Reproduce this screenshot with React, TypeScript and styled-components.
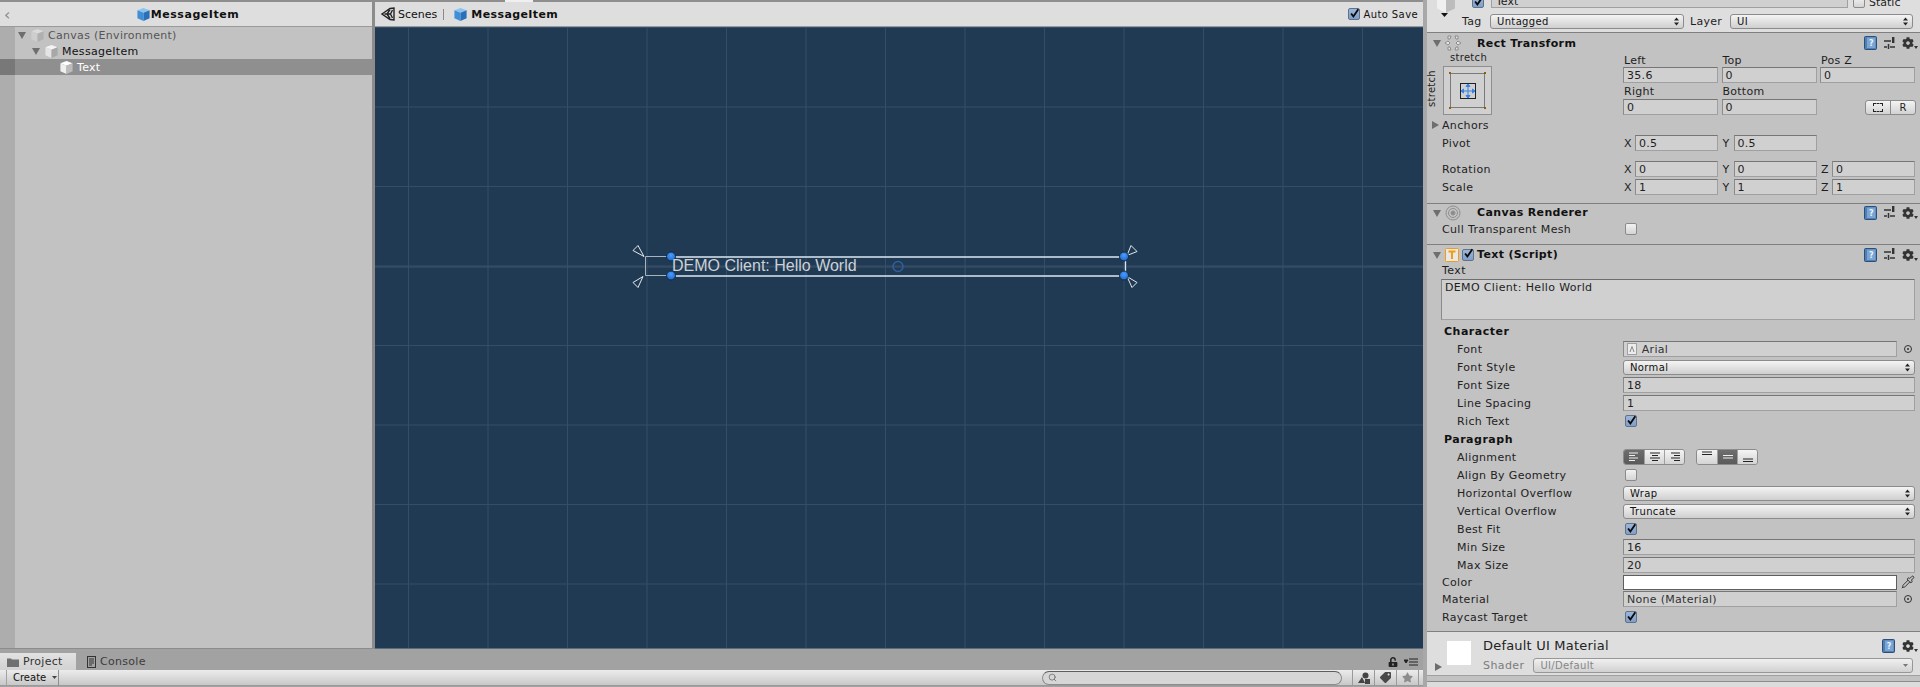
import React from 'react';
import styled, { createGlobalStyle } from 'styled-components';
import { Pipette, Search } from 'lucide-react';
import { FaCog, FaStar, FaTag, FaUnlockAlt } from 'react-icons/fa';

const GlobalStyle = createGlobalStyle`
  html, body { margin: 0; padding: 0; background: #c2c2c2; }
  * { box-sizing: border-box; }
`;

const Root = styled.div`
  display: flex;
  width: 1920px;
  height: 687px;
  overflow: hidden;
  font-family: 'DejaVu Sans', sans-serif;
  font-size: 11px;
  color: #1e1e1e;
`;

const Workspace = styled.div`
  display: flex;
  flex-direction: column;
  width: 1423px;
`;

const TopStrip = styled.div`
  height: 2px;
  background: #8e8e8e;
  flex: none;
`;

const StripTab = styled.div`
  width: 28px;
  height: 2px;
  margin-left: 505px;
  background: #f0f0f0;
`;

const MainArea = styled.div`
  display: flex;
  height: 647px;
`;

const Hierarchy = styled.div`
  display: flex;
  flex-direction: column;
  width: 372px;
  border-bottom: 1px solid #8c8c8c;
`;

const PanelHeader = styled.div<{ $center?: boolean }>`
  position: relative;
  display: flex;
  align-items: center;
  justify-content: ${(p) => (p.$center ? 'center' : 'flex-start')};
  flex: none;
  height: 25px;
  padding-left: ${(p) => (p.$center ? 3 : 0)}px;
  background: #dedede;
  border-bottom: 1px solid #9a9a9a;
  font-weight: 700;
  letter-spacing: 0.55px;
  color: #111;
`;

const BackChevron = styled.span`
  position: absolute;
  left: 4px;
  top: 3px;
  color: #8a8a8a;
  font-weight: 400;
  font-size: 16px;
`;

const Tree = styled.div`
  flex: 1;
  background: linear-gradient(to right, #adadad 15px, #c2c2c2 15px);
`;

const TreeRow = styled.div<{ $indent: number; $selected?: boolean; $muted?: boolean }>`
  display: flex;
  align-items: center;
  gap: 3px;
  height: 16px;
  padding-left: ${(p) => p.$indent}px;
  letter-spacing: 0.3px;
  color: ${(p) => (p.$selected ? '#fff' : p.$muted ? '#555' : '#111')};
  background: ${(p) => (p.$selected ? 'linear-gradient(to right, #787878 15px, #8f8f8f 15px)' : 'transparent')};
`;

const Splitter = styled.div`
  width: 3px;
  background: #8c8c8c;
`;

const Scene = styled.div`
  display: flex;
  flex-direction: column;
  flex: 1;
`;

const SceneCrumbs = styled(PanelHeader)`
  gap: 3px;
  padding: 0 5px 0 6px;
  font-weight: 400;
  letter-spacing: 0;
`;

const CrumbPipe = styled.span`
  width: 1px;
  height: 11px;
  margin: 0 6px 0 3px;
  background: #8a8a8a;
`;

const BoldText = styled.span`
  font-weight: 700;
  letter-spacing: 0.4px;
  color: #111;
`;

const AutoSave = styled.label`
  display: flex;
  align-items: center;
  gap: 3px;
  margin-left: auto;
  font-size: 10px;
  letter-spacing: 0.4px;
`;

const Viewport = styled.div`
  position: relative;
  flex: 1;
  background-color: #203a54;
  background-image: linear-gradient(to right, #344e68 1px, transparent 1px),
    linear-gradient(to bottom, #344e68 1px, transparent 1px);
  background-size: 79.5px 79.5px;
  background-position: 33px 0;
  border-bottom: 1px solid #5a6b7a;
`;

const GizmoLayer = styled.svg`
  position: absolute;
  left: 0;
  top: 0;
  width: 100%;
  height: 100%;
`;

const CanvasText = styled.span`
  position: absolute;
  left: 297px;
  top: 228px;
  font-family: 'Liberation Sans', Arial, sans-serif;
  font-size: 16px;
  line-height: 22px;
  color: #ccd1d6;
  white-space: nowrap;
`;

const BottomPanel = styled.div`
  display: flex;
  flex-direction: column;
  height: 38px;
  background: #a2a2a2;
`;

const TabBar = styled.div`
  display: flex;
  align-items: flex-end;
  height: 21px;
`;

const Tab = styled.div<{ $active?: boolean }>`
  display: flex;
  align-items: center;
  gap: 4px;
  height: 17px;
  width: 76px;
  padding-left: ${(p) => (p.$active ? 7 : 11)}px;
  background: ${(p) => (p.$active ? 'linear-gradient(#e2e2e2, #d2d2d2)' : 'transparent')};
  color: ${(p) => (p.$active ? '#333' : '#3c3c3c')};
  letter-spacing: 0.3px;
`;

const TabTools = styled.div`
  display: flex;
  align-items: center;
  gap: 6px;
  height: 17px;
  margin-left: auto;
  padding-right: 5px;
  color: #222;
`;

const ProjectBar = styled.div`
  display: flex;
  align-items: center;
  height: 16px;
  padding-left: 6px;
  background: linear-gradient(#ececec, #c8c8c8);
  border-bottom: 1px solid #9a9a9a;
`;

const CreateButton = styled.div`
  display: flex;
  align-items: center;
  gap: 6px;
  width: 53px;
  height: 16px;
  padding-left: 6px;
  border-left: 1px solid #a2a2a2;
  border-right: 1px solid #8e8e8e;
  font-size: 10px;
  color: #111;
`;

const SearchPill = styled.div`
  display: flex;
  align-items: center;
  width: 300px;
  height: 14px;
  margin-left: auto;
  padding-left: 5px;
  background: #d6d6d6;
  border: 1px solid #8c8c8c;
  border-top-color: #5e5e5e;
  border-radius: 7px;
  color: #666;
`;

const ToolBox = styled.div<{ $dim?: boolean }>`
  display: flex;
  align-items: center;
  justify-content: center;
  width: 22px;
  height: 16px;
  border-left: 1px solid #9a9a9a;
  color: ${(p) => (p.$dim ? '#8c8c8c' : '#4a4a4a')};
`;

const FilterGroup = styled.div`
  display: flex;
  margin: 0 4px 0 10px;
  border-right: 1px solid #9a9a9a;
`;

const Inspector = styled.div`
  display: flex;
  flex-direction: column;
  width: 497px;
  background: #c2c2c2;
  border-left: 4px solid #a8a8a8;
`;

const ObjectHeader = styled.div`
  display: flex;
  flex: none;
  height: 32px;
  background: #dedede;
  overflow: hidden;
`;

const ObjectIcon = styled.div`
  position: relative;
  flex: none;
  width: 35px;
  padding: 0 0 0 8px;
  margin-top: -8px;
`;

const IconCaret = styled.svg`
  position: absolute;
  left: 14px;
  top: 21px;
`;

const ObjectFields = styled.div`
  display: flex;
  flex-direction: column;
  flex: 1;
  padding-right: 7px;
`;

const NameRow = styled.div`
  display: flex;
  align-items: flex-end;
  gap: 7px;
  height: 11px;
  margin-top: -3px;
  padding-left: 10px;
`;

const NameInput = styled.div`
  display: flex;
  align-items: flex-end;
  width: 357px;
  height: 11px;
  padding: 0 0 0 4px;
  background: #d0d0d0;
  border: 1px solid #a0a0a0;
  border-top: 0;
  line-height: 10px;
  overflow: hidden;
`;

const StaticFlag = styled.span`
  display: flex;
  align-items: flex-end;
  gap: 4px;
  margin-left: -2px;
  line-height: 10px;
`;

const TagRow = styled.div`
  display: flex;
  align-items: center;
  height: 16px;
  margin-top: 5px;
  font-size: 11px;
  letter-spacing: 0.3px;
`;

const TagLabel = styled.span<{ $width: number; $indent: number }>`
  width: ${(p) => p.$width}px;
  padding-left: ${(p) => p.$indent}px;
  flex: none;
`;

const Popup = styled.div<{ $width?: number; $disabled?: boolean }>`
  display: flex;
  align-items: center;
  justify-content: space-between;
  flex: ${(p) => (p.$width ? 'none' : 1)};
  width: ${(p) => (p.$width ? `${p.$width}px` : 'auto')};
  height: 15px;
  padding: 0 4px 0 6px;
  background: linear-gradient(#f4f4f4, #cfcfcf);
  border: 1px solid #8b8b8b;
  border-radius: 3px;
  font-size: 10px;
  letter-spacing: 0.35px;
  color: ${(p) => (p.$disabled ? '#777' : '#111')};
  opacity: ${(p) => (p.$disabled ? 0.85 : 1)};
`;

const Component = styled.section<{ $pad: number }>`
  flex: none;
  padding-bottom: ${(p) => p.$pad}px;
  border-top: 1px solid #7f7f7f;
`;

const ComponentHeader = styled.div<{ $height: number }>`
  display: flex;
  align-items: center;
  height: ${(p) => p.$height}px;
  padding: 0 2px 0 5px;
`;

const HeaderLeft = styled.div`
  display: flex;
  align-items: center;
  width: 45px;
  gap: 3px;
  flex: none;
`;

const ComponentTitle = styled.span`
  font-weight: 700;
  letter-spacing: 0.35px;
  color: #111;
`;

const HeaderTools = styled.div`
  display: flex;
  align-items: center;
  gap: 7px;
  margin-left: auto;
  color: #333;
`;

const RectBody = styled.div`
  display: flex;
  height: 63px;
`;

const AnchorColumn = styled.div`
  position: relative;
  width: 196px;
  flex: none;
`;

const StretchTop = styled.span`
  position: absolute;
  left: 23px;
  top: -1px;
  font-size: 10px;
  letter-spacing: 0.3px;
`;

const StretchSide = styled.span`
  position: absolute;
  left: -14px;
  top: 30px;
  font-size: 10px;
  letter-spacing: 0.3px;
  transform: rotate(-90deg);
`;

const AnchorBox = styled.div`
  position: absolute;
  left: 16px;
  top: 13px;
  width: 49px;
  height: 49px;
  background: #d0d0d0;
  border: 1px solid #8f8f8f;
`;

const RectGrid = styled.div`
  display: grid;
  flex: none;
  grid-template-columns: repeat(3, 95px);
  grid-template-rows: 14px 16px 16px 16px;
  column-gap: 3.5px;
  width: 292px;
`;

const SmallLabel = styled.span`
  padding-left: 1px;
  letter-spacing: 0.25px;
  align-self: center;
`;

const Field = styled.div<{ $width?: number }>`
  display: flex;
  align-items: center;
  flex: ${(p) => (p.$width ? 'none' : 1)};
  width: ${(p) => (p.$width ? `${p.$width}px` : 'auto')};
  height: 16px;
  min-width: 0;
  padding-left: 3px;
  background: #d0d0d0;
  border: 1px solid #a0a0a0;
  border-top-color: #767676;
  border-left-color: #8a8a8a;
  letter-spacing: 0.3px;
`;

const ButtonPair = styled.div`
  display: flex;
  align-self: center;
  justify-self: end;
  width: 51px;
  height: 15px;
  margin-right: -1px;
  background: linear-gradient(#f4f4f4, #d2d2d2);
  border: 1px solid #8b8b8b;
  border-radius: 3px;
`;

const PairPart = styled.span`
  display: flex;
  align-items: center;
  justify-content: center;
  flex: 1;
  font-size: 10px;
  & + & { border-left: 1px solid #8b8b8b; }
`;

const DashedIcon = styled.span`
  width: 10px;
  height: 9px;
  border: 1px dashed #222;
`;

const Row = styled.div<{ $height?: number }>`
  display: grid;
  grid-template-columns: 196px 292px;
  align-items: center;
  height: ${(p) => p.$height ?? 18}px;
`;

const Label = styled.span<{ $indent?: number; $bold?: boolean }>`
  display: flex;
  align-items: center;
  gap: 2px;
  padding-left: ${(p) => p.$indent ?? 15}px;
  font-weight: ${(p) => (p.$bold ? 700 : 400)};
  letter-spacing: ${(p) => (p.$bold ? 0.5 : 0.35)}px;
  color: ${(p) => (p.$bold ? '#111' : '#222')};
`;

const VectorSpacer = styled.div`
  height: 8px;
`;

const VectorGrid = styled.div`
  display: grid;
  grid-template-columns: repeat(3, 95px);
  column-gap: 3.5px;
`;

const VectorCell = styled.div`
  display: flex;
  align-items: center;
  gap: 3px;
`;

const Axis = styled.span`
  width: 9px;
  flex: none;
  padding-left: 1px;
`;

const Check = styled.span<{ $on?: boolean; $indent?: number }>`
  display: flex;
  align-items: center;
  justify-content: center;
  flex: none;
  width: 12px;
  height: 12px;
  margin-left: ${(p) => p.$indent ?? 0}px;
  background: ${(p) => (p.$on ? 'linear-gradient(#9db6d8, #7f9fc9)' : 'linear-gradient(#f2f2f2, #d4d4d4)')};
  border: 1px solid ${(p) => (p.$on ? '#61718a' : '#8b8b8b')};
  border-radius: 2px;
`;

const TextLabel = styled.div`
  height: 14px;
  padding-left: 15px;
  line-height: 14px;
  letter-spacing: 0.4px;
`;

const TextArea = styled.div`
  height: 41px;
  margin: 1px 5px 0 14px;
  padding: 1px 3px;
  background: #d0d0d0;
  border: 1px solid #a0a0a0;
  border-top-color: #6e6e6e;
  border-left-color: #8a8a8a;
  letter-spacing: 0.35px;
`;

const SectionGap = styled.div`
  height: 2px;
`;

const ObjectField = styled.div`
  display: flex;
  align-items: center;
  gap: 4px;
  color: #333;
`;

const SwatchField = styled.div`
  width: 274px;
  height: 15px;
  background: #fff;
  border: 1px solid #5e5e5e;
`;

const SegmentGroups = styled.div`
  display: flex;
  gap: 11px;
`;

const Segments = styled.div`
  display: flex;
  height: 16px;
  border: 1px solid #8b8b8b;
  border-radius: 3px;
  overflow: hidden;
`;

const Segment = styled.span<{ $on?: boolean }>`
  display: flex;
  align-items: center;
  justify-content: center;
  width: 20px;
  background: ${(p) => (p.$on ? 'linear-gradient(#6e6e6e, #5a5a5a)' : 'linear-gradient(#f4f4f4, #d4d4d4)')};
  color: ${(p) => (p.$on ? '#eee' : '#222')};
  & + & { border-left: 1px solid #a0a0a0; }
`;

const MaterialSection = styled.section`
  display: flex;
  flex: none;
  height: 45px;
  padding: 9px 2px 0 20px;
  background: #dedede;
  border-top: 1px solid #7f7f7f;
  border-bottom: 1px solid #a0a0a0;
  position: relative;
`;

const Swatch = styled.div`
  width: 24px;
  height: 24px;
  flex: none;
  background: #fff;
`;

const MaterialInfo = styled.div`
  display: flex;
  flex-direction: column;
  flex: 1;
  margin-left: 12px;
  margin-top: -5px;
`;

const MaterialName = styled.div`
  display: flex;
  align-items: center;
  justify-content: space-between;
  height: 19px;
  font-size: 13px;
  letter-spacing: 0.2px;
  color: #222;
`;

const ShaderRow = styled.div`
  display: flex;
  align-items: center;
  gap: 9px;
  margin: 3px 5px 0 0;
  color: #7c7c7c;
  letter-spacing: 0.4px;
`;

const MaterialCaret = styled.span`
  position: absolute;
  left: 6px;
  top: 30px;
`;

const InspectorFoot = styled.div`
  flex: 1;
  background: #dcdcdc;
  border-top: 1px solid #8c8c8c;
  margin-top: 5px;
`;

const Cube = ({ tone = 'grey', size = 15 }: { tone?: 'blue' | 'grey' | 'white' | 'faded'; size?: number }) => {
  const faces = {
    blue: ['#8cc4f0', '#3f8fd8', '#2a70b8'],
    grey: ['#f4f4f4', '#e4e4e4', '#a8a8a8'],
    white: ['#ffffff', '#f0f0f0', '#bcbcbc'],
    faded: ['#dadada', '#cecece', '#b0b0b0'],
  }[tone];
  return (
    <svg width={size} height={size} viewBox="0 0 16 16">
      <path d="M8 1 14.5 3.5 8 6 1.500 3.500Z" fill={faces[0]} />
      <path d="M1.500 3.500 8 6V15L1.500 12Z" fill={faces[1]} />
      <path d="M14.500 3.500 8 6V15L14.500 12Z" fill={faces[2]} />
    </svg>
  );
};

const Caret = ({ open = false, color = '#6e6e6e' }: { open?: boolean; color?: string }) => (
  <svg width="10" height="10" viewBox="0 0 10 10">
    <path d={open ? 'M1 2H9L5 9Z' : 'M2 1V9L9 5Z'} fill={color} />
  </svg>
);

const Tick = () => (
  <svg width="13" height="13" viewBox="0 0 13 13" style={{ margin: '-2px -1px 0 0' }}>
    <path d="M2.500 6.500 5.200 10 11 1.500" fill="none" stroke="#0a0a0a" strokeWidth="2.200" />
  </svg>
);

const PopArrows = () => (
  <svg width="5" height="9" viewBox="0 0 5 9">
    <path d="M0 3.500 2.500 0.500 5 3.500ZM0 5.500H5L2.500 8.500Z" fill="#222" />
  </svg>
);

const HelpBook = () => (
  <svg width="13" height="14" viewBox="0 0 13 14">
    <rect x="0.500" y="0.500" width="12" height="13" rx="1" fill="#4f7fb4" stroke="#2c4f78" />
    <rect x="3" y="1.500" width="8.500" height="10.500" fill="#7aa4d2" />
    <text x="7.200" y="10" fontSize="8" fontWeight="700" textAnchor="middle" fill="#eaf2fa" fontFamily="'DejaVu Sans', sans-serif">?</text>
  </svg>
);

const Sliders = () => (
  <svg width="11" height="13" viewBox="0 0 11 13">
    <path d="M0 4H7M0 10H3M6 10H11M9 1V5M4.500 7V12" stroke="#333" strokeWidth="1.500" fill="none" />
    <rect x="8" y="0" width="2.400" height="6" fill="#333" />
  </svg>
);

const GearWrap = styled.span`
  display: flex;
  align-items: flex-end;
`;

const Gear = () => (
  <GearWrap>
    <FaCog size={12} color="#333" />
    <svg width="4" height="3" viewBox="0 0 4 3"><path d="M0 0H4L2 3Z" fill="#333" /></svg>
  </GearWrap>
);

const ComponentTools = () => (
  <HeaderTools>
    <HelpBook />
    <Sliders />
    <Gear />
  </HeaderTools>
);

const RectIcon = () => (
  <svg width="16" height="16" viewBox="0 0 16 16" fill="none" stroke="#8c8c8c">
    <path d="M3 1 6 1 5 4 3 4ZM10 1 13 1 13 4 11 4ZM3 15 6 15 5 12 3 12ZM10 15 13 15 13 12 11 12Z" fill="#e4e4e4" />
    <path d="M0 8 3 6 5 8 3 10ZM16 8 13 6 11 8 13 10Z" fill="#e4e4e4" />
  </svg>
);

const EyeIcon = () => (
  <svg width="16" height="16" viewBox="0 0 16 16" fill="none" stroke="#8e8e8e">
    <circle cx="8" cy="8" r="7" />
    <circle cx="8" cy="8" r="4.500" />
    <circle cx="8" cy="8" r="2" fill="#8e8e8e" />
  </svg>
);

const TextIcon = () => (
  <svg width="14" height="14" viewBox="0 0 14 14">
    <rect x="0.500" y="0.500" width="13" height="13" rx="1" fill="#e8e8e8" stroke="#f39c12" />
    <path d="M3.500 3.500H10.500M7 3.500V11" stroke="#f39c12" strokeWidth="2" fill="none" />
  </svg>
);

const AnchorGlyph = () => (
  <svg width="47" height="47" viewBox="0 0 47 47" fill="none">
    <rect x="6.500" y="6.500" width="34" height="34" stroke="#7a7a7a" />
    <rect x="5" y="5" width="2" height="2" fill="#9a5a00" />
    <rect x="40" y="5" width="2" height="2" fill="#9a5a00" />
    <rect x="5" y="40" width="2" height="2" fill="#9a5a00" />
    <rect x="40" y="40" width="2" height="2" fill="#9a5a00" />
    <rect x="16.500" y="16.500" width="15" height="15" stroke="#222" />
    <path d="M24 18V30M18 24H30M24 17 22 19.500H26ZM24 31 22 28.500H26ZM17 24 19.500 22V26ZM31 24 28.500 22V26Z" stroke="#3484e8" fill="#3484e8" />
  </svg>
);

const AlignGlyph = ({ kind, light }: { kind: string; light?: boolean }) => {
  const paths: Record<string, string> = {
    left: 'M1 2H10M1 4.500H7M1 7H10M1 9.500H7',
    center: 'M1 2H11M3 4.500H9M1 7H11M3 9.500H9',
    right: 'M2 2H11M5 4.500H11M2 7H11M5 9.500H11',
    top: 'M1 1H11M1 3.500H11',
    middle: 'M1 4.500H11M1 7H11',
    bottom: 'M1 8H11M1 10.500H11',
  };
  return (
    <svg width="12" height="12" viewBox="0 0 12 12">
      <path d={paths[kind]} stroke={light ? '#eeeeee' : '#222'} fill="none" />
    </svg>
  );
};

const UnityLogo = () => (
  <svg width="14" height="14" viewBox="0 0 14 14" fill="none">
    <path d="M1 7 9 1.500 13 1 13 13 9 12.500Z M3.500 7H9M9 2.500 6 7 9 11.500M11.500 3 9.500 7 11.500 11" stroke="#222" strokeWidth="1.400" />
  </svg>
);

const SelectDot = () => (
  <svg width="10" height="10" viewBox="0 0 10 10" style={{ marginLeft: 2 }} fill="none">
    <circle cx="5" cy="5" r="3.500" stroke="#333" />
    <circle cx="5" cy="5" r="1" fill="#333" />
  </svg>
);

const FontGlyph = () => (
  <svg width="11" height="12" viewBox="0 0 11 12">
    <rect x="0.500" y="0.500" width="9" height="11" fill="#ececec" stroke="#a0a0a0" />
    <path d="M3 9 5 3.500 7 9" stroke="#888" fill="none" />
  </svg>
);

const Gizmo = () => (
  <GizmoLayer viewBox="0 0 1048 620">
    <defs>
      <radialGradient id="handle" cx="50%" cy="35%" r="70%">
        <stop offset="0%" stopColor="#4a9cff" />
        <stop offset="100%" stopColor="#1a64c8" />
      </radialGradient>
    </defs>
    <path d="M0 239.500H1048" stroke="#3f5469" strokeWidth="1" />
    <g fill="none" stroke="#cfd4da" strokeWidth="1">
      <path d="M270.500 229H296M270.500 248H296M270.500 229V248" stroke="#a9b3bc" />
      <path d="M258 223 263 218 269 229ZM258 255 268 249 263 260ZM752 228 756 218 762 224ZM752 249 762 255 757 260Z" stroke="#e4e8ec" />
    </g>
    <path d="M296 229.500H749M296 248.500H749M750.500 229V248" fill="none" stroke="#dbe7f2" strokeWidth="1.300" />
    <circle cx="523" cy="239" r="5" fill="none" stroke="#2f5f9f" strokeWidth="1.500" />
    {[[296, 229], [296, 248], [749, 229], [749, 248]].map(([cx, cy]) => (
      <circle key={`${cx}-${cy}`} cx={cx} cy={cy} r="4.500" fill="url(#handle)" stroke="#14283c" />
    ))}
  </GizmoLayer>
);

const Vector = ({ values }: { values: [string, string][] }) => (
  <VectorGrid>
    {values.map(([axis, value]) => (
      <VectorCell key={axis}>
        <Axis>{axis}</Axis>
        <Field>{value}</Field>
      </VectorCell>
    ))}
  </VectorGrid>
);

const CheckRow = ({ label, on, indent }: { label: string; on?: boolean; indent?: number }) => (
  <Row>
    <Label $indent={indent}>{label}</Label>
    <Check $on={on} $indent={2}>{on && <Tick />}</Check>
  </Row>
);

const PopupRow = ({ label, value }: { label: string; value: string }) => (
  <Row>
    <Label $indent={30}>{label}</Label>
    <Popup>{value}<PopArrows /></Popup>
  </Row>
);

const FieldRow = ({ label, value }: { label: string; value: string }) => (
  <Row>
    <Label $indent={30}>{label}</Label>
    <Field>{value}</Field>
  </Row>
);

export default function App() {
  return (
    <Root>
      <GlobalStyle />
      <Workspace>
        <TopStrip><StripTab /></TopStrip>
        <MainArea>
          <Hierarchy>
            <PanelHeader $center>
              <BackChevron>‹</BackChevron>
              <Cube tone="blue" />
              <span>MessageItem</span>
            </PanelHeader>
            <Tree>
              <TreeRow $indent={17} $muted>
                <Caret open />
                <Cube tone="faded" />
                <span>Canvas (Environment)</span>
              </TreeRow>
              <TreeRow $indent={31}>
                <Caret open />
                <Cube />
                <span>MessageItem</span>
              </TreeRow>
              <TreeRow $indent={59} $selected>
                <Cube tone="white" />
                <span>Text</span>
              </TreeRow>
            </Tree>
          </Hierarchy>
          <Splitter />
          <Scene>
            <SceneCrumbs>
              <UnityLogo />
              <span>Scenes</span>
              <CrumbPipe />
              <Cube tone="blue" />
              <BoldText>MessageItem</BoldText>
              <AutoSave>
                <Check $on><Tick /></Check>
                Auto Save
              </AutoSave>
            </SceneCrumbs>
            <Viewport>
              <Gizmo />
              <CanvasText>DEMO Client: Hello World</CanvasText>
            </Viewport>
          </Scene>
        </MainArea>
        <BottomPanel>
          <TabBar>
            <Tab $active>
              <svg width="12" height="10" viewBox="0 0 12 10">
                <path d="M0 1.500H4L5 2.500H12V10H0Z" fill="#707070" />
              </svg>
              Project
            </Tab>
            <Tab>
              <svg width="9" height="12" viewBox="0 0 9 12" fill="none" stroke="#333">
                <rect x="0.500" y="0.500" width="8" height="11" />
                <path d="M2 3H7M2 5H7M2 7H7M2 9H5" />
              </svg>
              Console
            </Tab>
            <TabTools>
              <FaUnlockAlt size={10} />
              <svg width="14" height="8" viewBox="0 0 14 8">
                <path d="M0 2H4L2 5ZM5 1H14M5 4H14M5 7H14" fill="#222" stroke="#222" />
              </svg>
            </TabTools>
          </TabBar>
          <ProjectBar>
            <CreateButton>
              Create
              <svg width="5" height="3" viewBox="0 0 5 3"><path d="M0 0H5L2.500 3Z" fill="#444" /></svg>
            </CreateButton>
            <SearchPill><Search size={9} strokeWidth={2} /></SearchPill>
            <FilterGroup>
              <ToolBox>
                <svg width="12" height="12" viewBox="0 0 12 12">
                  <path d="M0 11 4 5 7 11Z" fill="#444" />
                  <circle cx="7.500" cy="3.500" r="3" fill="#444" />
                  <rect x="7" y="7" width="5" height="5" fill="#444" />
                </svg>
              </ToolBox>
              <ToolBox><FaTag size={11} style={{ transform: 'scaleX(-1)' }} /></ToolBox>
              <ToolBox $dim><FaStar size={11} /></ToolBox>
            </FilterGroup>
          </ProjectBar>
        </BottomPanel>
      </Workspace>

      <Inspector>
        <ObjectHeader>
          <ObjectIcon>
            <Cube size={22} tone="white" />
            <IconCaret width="7" height="4" viewBox="0 0 7 4"><path d="M0 0H7L3.500 4Z" fill="#111" /></IconCaret>
          </ObjectIcon>
          <ObjectFields>
            <NameRow>
              <Check $on><Tick /></Check>
              <NameInput>Text</NameInput>
              <StaticFlag>
                <Check />
                Static
              </StaticFlag>
            </NameRow>
            <TagRow>
              <TagLabel $width={28} $indent={0}>Tag</TagLabel>
              <Popup $width={194}>Untagged<PopArrows /></Popup>
              <TagLabel $width={46} $indent={6}>Layer</TagLabel>
              <Popup $width={183}>UI<PopArrows /></Popup>
            </TagRow>
          </ObjectFields>
        </ObjectHeader>

        <Component $pad={7}>
          <ComponentHeader $height={20}>
            <HeaderLeft><Caret open /><RectIcon /></HeaderLeft>
            <ComponentTitle>Rect Transform</ComponentTitle>
            <ComponentTools />
          </ComponentHeader>
          <RectBody>
            <AnchorColumn>
              <StretchTop>stretch</StretchTop>
              <StretchSide>stretch</StretchSide>
              <AnchorBox><AnchorGlyph /></AnchorBox>
            </AnchorColumn>
            <RectGrid>
              <SmallLabel>Left</SmallLabel>
              <SmallLabel>Top</SmallLabel>
              <SmallLabel>Pos Z</SmallLabel>
              <Field>35.6</Field>
              <Field>0</Field>
              <Field>0</Field>
              <SmallLabel>Right</SmallLabel>
              <SmallLabel>Bottom</SmallLabel>
              <span />
              <Field>0</Field>
              <Field>0</Field>
              <ButtonPair>
                <PairPart><DashedIcon /></PairPart>
                <PairPart>R</PairPart>
              </ButtonPair>
            </RectGrid>
          </RectBody>
          <Row>
            <Label $indent={3}><Caret />Anchors</Label>
          </Row>
          <Row>
            <Label>Pivot</Label>
            <Vector values={[['X', '0.5'], ['Y', '0.5']]} />
          </Row>
          <VectorSpacer />
          <Row>
            <Label>Rotation</Label>
            <Vector values={[['X', '0'], ['Y', '0'], ['Z', '0']]} />
          </Row>
          <Row>
            <Label>Scale</Label>
            <Vector values={[['X', '1'], ['Y', '1'], ['Z', '1']]} />
          </Row>
        </Component>

        <Component $pad={7}>
          <ComponentHeader $height={17}>
            <HeaderLeft><Caret open /><EyeIcon /></HeaderLeft>
            <ComponentTitle>Canvas Renderer</ComponentTitle>
            <ComponentTools />
          </ComponentHeader>
          <Row $height={16}>
            <Label>Cull Transparent Mesh</Label>
            <Check $indent={2} />
          </Row>
        </Component>

        <Component $pad={5}>
          <ComponentHeader $height={19}>
            <HeaderLeft>
              <Caret open />
              <TextIcon />
              <Check $on><Tick /></Check>
            </HeaderLeft>
            <ComponentTitle>Text (Script)</ComponentTitle>
            <ComponentTools />
          </ComponentHeader>
          <TextLabel>Text</TextLabel>
          <TextArea>DEMO Client: Hello World</TextArea>
          <SectionGap />
          <Row><Label $indent={17} $bold>Character</Label></Row>
          <Row>
            <Label $indent={30}>Font</Label>
            <ObjectField>
              <Field $width={274}><FontGlyph />&nbsp;Arial</Field>
              <SelectDot />
            </ObjectField>
          </Row>
          <PopupRow label="Font Style" value="Normal" />
          <FieldRow label="Font Size" value="18" />
          <FieldRow label="Line Spacing" value="1" />
          <CheckRow label="Rich Text" on indent={30} />
          <Row><Label $indent={17} $bold>Paragraph</Label></Row>
          <Row>
            <Label $indent={30}>Alignment</Label>
            <SegmentGroups>
              <Segments>
                <Segment $on><AlignGlyph kind="left" light /></Segment>
                <Segment><AlignGlyph kind="center" /></Segment>
                <Segment><AlignGlyph kind="right" /></Segment>
              </Segments>
              <Segments>
                <Segment><AlignGlyph kind="top" /></Segment>
                <Segment $on><AlignGlyph kind="middle" light /></Segment>
                <Segment><AlignGlyph kind="bottom" /></Segment>
              </Segments>
            </SegmentGroups>
          </Row>
          <CheckRow label="Align By Geometry" indent={30} />
          <PopupRow label="Horizontal Overflow" value="Wrap" />
          <PopupRow label="Vertical Overflow" value="Truncate" />
          <CheckRow label="Best Fit" on indent={30} />
          <FieldRow label="Min Size" value="16" />
          <FieldRow label="Max Size" value="20" />
          <Row $height={16}>
            <Label>Color</Label>
            <ObjectField>
              <SwatchField />
              <Pipette size={14} strokeWidth={1.5} color="#222" />
            </ObjectField>
          </Row>
          <Row>
            <Label>Material</Label>
            <ObjectField>
              <Field $width={274}>None (Material)</Field>
              <SelectDot />
            </ObjectField>
          </Row>
          <CheckRow label="Raycast Target" on />
        </Component>

        <MaterialSection>
          <MaterialCaret><Caret /></MaterialCaret>
          <Swatch />
          <MaterialInfo>
            <MaterialName>
              Default UI Material
              <HeaderTools>
                <HelpBook />
                <Gear />
              </HeaderTools>
            </MaterialName>
            <ShaderRow>
              Shader
              <Popup $disabled>
                UI/Default
                <svg width="5" height="3" viewBox="0 0 5 3"><path d="M0 0H5L2.500 3Z" fill="#666" /></svg>
              </Popup>
            </ShaderRow>
          </MaterialInfo>
        </MaterialSection>
        <InspectorFoot />
      </Inspector>
    </Root>
  );
}
